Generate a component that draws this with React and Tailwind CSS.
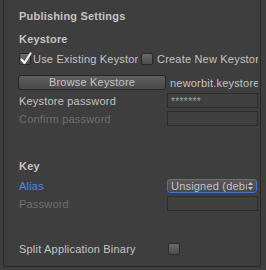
import React from 'react';

const Check = ({ checked }) => (
  <span className="relative w-[12px] h-[12px] shrink-0 rounded-[2px] border border-[#2a2a2a] bg-gradient-to-b from-[#6a6a6a] to-[#4c4c4c]">
    {checked && (
      <svg className="absolute -left-[1px] -top-[3px]" width="14" height="15" viewBox="0 0 14 15">
        <path d="M2.5 8.5 L5.5 12 L11.5 2.5" fill="none" stroke="#f2f2f2" strokeWidth="2.2" strokeLinecap="round" strokeLinejoin="round" />
      </svg>
    )}
  </span>
);

const Field = ({ children, className = '' }) => (
  <div className={`w-[91px] h-[15px] border border-[#2b2b2b] bg-[#404040] px-[3px] flex items-center overflow-hidden ${className}`}>
    {children}
  </div>
);

export default function App() {
  return (
    <div className="w-[266px] h-[270px] bg-[#3e3e3e] overflow-hidden text-[11px] leading-[14px] tracking-[0.2px] text-[#c4c4c4]" style={{ fontFamily: '"Liberation Sans", Arial, sans-serif' }}>
      <div className="ml-[3px] w-[258px] h-[267px] border-x border-b border-[#272727] rounded-b-[3px] flex flex-col pl-[15px] pr-[2px]">
        {/* Header */}
        <div className="mt-[9px] h-[14px] font-bold">Publishing Settings</div>

        {/* Keystore */}
        <div className="mt-[9px] h-[14px] font-bold">Keystore</div>
        <div className="mt-[6px] h-[14px] flex items-center">
          <div className="w-[122px] flex items-center gap-[2px] overflow-hidden whitespace-nowrap">
            <Check checked />
            <span className="overflow-hidden w-[106px]">Use Existing Keystore</span>
          </div>
          <div className="flex-1 flex items-center gap-[4px] overflow-hidden whitespace-nowrap">
            <Check />
            <span className="overflow-hidden">Create New Keystore</span>
          </div>
        </div>

        <div className="mt-[9px] h-[15px] flex items-center">
          <button className="-ml-[1px] w-[148px] h-[15px] rounded-[3px] border border-[#262626] bg-gradient-to-b from-[#5e5e5e] to-[#4a4a4a] text-[#c4c4c4] leading-[13px]">
            Browse Keystore
          </button>
          <span className="ml-[4px] overflow-hidden whitespace-nowrap flex-1">neworbit.keystore</span>
        </div>

        <div className="mt-[3px] h-[15px] flex items-center justify-between">
          <span>Keystore password</span>
          <Field><span className="text-[#a6a6a6] text-[10px] tracking-[0.4px] pt-[3px]">*******</span></Field>
        </div>
        <div className="mt-[3px] h-[15px] flex items-center justify-between">
          <span className="text-[#6e6e6e]">Confirm password</span>
          <Field />
        </div>

        {/* Key */}
        <div className="mt-[33px] h-[14px] font-bold">Key</div>
        <div className="mt-[6px] h-[14px] flex items-center justify-between">
          <span className="text-[#5283ee]">Alias</span>
          <div className="w-[90px] mr-[1px] h-[14px] rounded-[3px] border border-[#3f6fe6] bg-gradient-to-b from-[#585858] to-[#4a4a4a] flex items-center pl-[3px] pr-[3px]">
            <span className="flex-1 overflow-hidden whitespace-nowrap leading-[12px]">Unsigned (debug)</span>
            <svg width="5" height="8" viewBox="0 0 5 8" className="shrink-0 ml-[1px]">
              <path d="M0 3 L2.5 0 L5 3 Z M0 5 L2.5 8 L5 5 Z" fill="#c4c4c4" />
            </svg>
          </div>
        </div>
        <div className="mt-[3px] h-[15px] flex items-center justify-between">
          <span className="text-[#6e6e6e]">Password</span>
          <Field />
        </div>

        {/* Split binary */}
        <div className="mt-[31px] h-[14px] flex items-center">
          <span className="w-[149px]">Split Application Binary</span>
          <Check />
        </div>
      </div>
    </div>
  );
}
